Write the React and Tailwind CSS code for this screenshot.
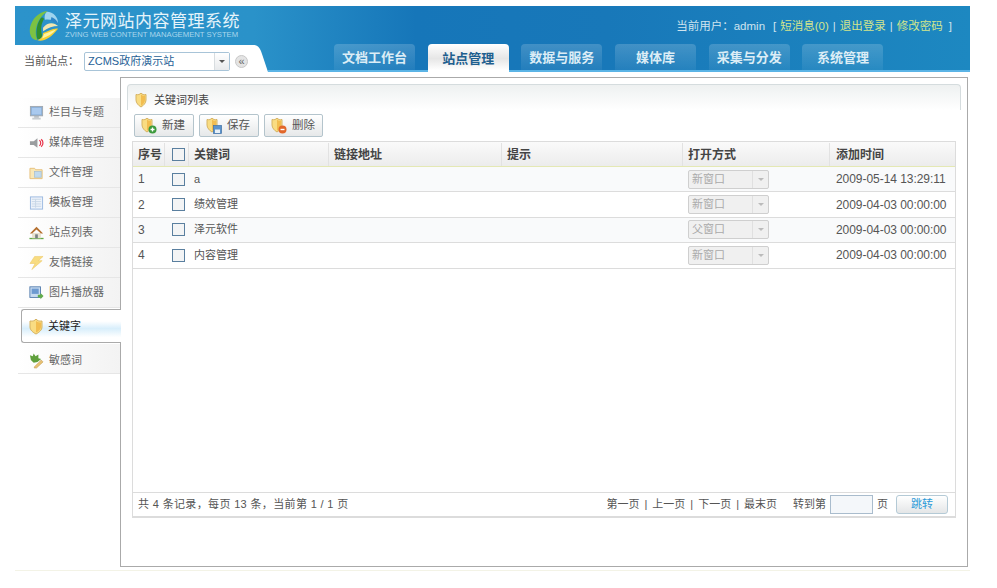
const tabs = ['文档工作台', '站点管理', '数据与服务', '媒体库', '采集与分发', '系统管理'];

const rows = [
  { id: 1, name: 'a', open: '新窗口', time: '2009-05-14 13:29:11' },
  { id: 2, name: '绩效管理', open: '新窗口', time: '2009-04-03 00:00:00' },
  { id: 3, name: '泽元软件', open: '父窗口', time: '2009-04-03 00:00:00' },
  { id: 4, name: '内容管理', open: '新窗口', time: '2009-04-03 00:00:00' },
];

const gridCols = 'grid grid-cols-[32px_24px_140px_173px_181px_147px_1fr]';

function Logo() {
  return (
    <svg width="30" height="32" viewBox="0 0 32 36" preserveAspectRatio="none">
      <path d="M20 1 C10 2 3 10 1 20 C0 28 3 34 9 34 C6 28 7 18 11 11 C13 7 17 3 20 1Z" fill="#7cc243" />
      <path d="M12 10 C8 16 7 26 9 33 C12 33 14 31 14 28 C12 22 13 15 16 10 C15 8 13 8 12 10Z" fill="#2f8f2e" />
      <path d="M19 2 C26 2 31 8 31 15 C27 12 22 10 17 11 C16 7 17 4 19 2Z" fill="#9fd4ee" />
      <path d="M24 8 C28 10 31 13 31 16 C28 14 26 13 23 12Z" fill="#2f86c8" />
      <path d="M15 20 C20 13 27 14 31 18 C26 18 20 20 15 24Z" fill="#f3e7b0" />
      <path d="M9 34 C15 36 23 32 31 21 C26 20 20 24 15 26 C15 30 13 33 9 34Z" fill="#f6d02f" />
      <path d="M16 27 C20 26 25 23 29 22 C25 27 20 30 14 32Z" fill="#fff3a0" />
    </svg>
  );
}

function Shield({ badge }) {
  return (
    <svg width="17" height="17" viewBox="0 0 17 17" className="shrink-0">
      <path d="M2 2.5 C4 3 6 2.5 7 1 C8 2.5 10 3 12 2.5 L12 8 C12 11 9.5 13.5 7 15 C4.500 13.500 2 11 2 8Z" fill="#f9dc82" stroke="#d6b363" strokeWidth="1" />
      <path d="M7 2.500 C8 3.500 9.500 4 11 3.600 L11 8 C11 10 9 12.500 7 13.800Z" fill="#f2bd50" />
      {badge === 'add' && (
        <g>
          <circle cx="12.500" cy="12.500" r="4" fill="#3c9a3c" />
          <path d="M10.500 12.500 H14.500 M12.500 10.500 V14.500" stroke="#fff" strokeWidth="1.300" />
        </g>
      )}
      {badge === 'save' && (
        <g>
          <rect x="8.500" y="8.500" width="8" height="8" fill="#5b93cc" stroke="#3f6fa3" strokeWidth="0.700" />
          <rect x="10" y="12.500" width="5" height="3.500" fill="#e8f0f6" />
        </g>
      )}
      {badge === 'del' && (
        <g>
          <circle cx="12.500" cy="12.500" r="4" fill="#e2672a" />
          <path d="M10.500 12.500 H14.500" stroke="#fff" strokeWidth="1.400" />
        </g>
      )}
    </svg>
  );
}

const icons = {
  monitor: (
    <svg width="16" height="16" viewBox="0 0 16 16">
      <rect x="1.500" y="1" width="13" height="10" fill="#8aaed6" stroke="#a0a8b0" />
      <rect x="3" y="2.500" width="10" height="7" fill="#a9c9ee" />
      <rect x="5.500" y="11.500" width="5" height="1.500" fill="#a8b0b6" />
      <rect x="3.500" y="13" width="9" height="2" fill="#c8cdd1" />
    </svg>
  ),
  speaker: (
    <svg width="16" height="16" viewBox="0 0 16 16">
      <path d="M1 6 H5 L9 3 V13 L5 10 H1Z" fill="#9a9d9f" />
      <path d="M11 5 C13 6 13 10 11 11 M13 4 C15.500 6 15.500 10 13 12" fill="none" stroke="#e8354c" strokeWidth="1.300" />
    </svg>
  ),
  folder: (
    <svg width="16" height="16" viewBox="0 0 16 16">
      <path d="M1 3 H6 L7 4.500 H14 V14 H1Z" fill="#f8e8b8" stroke="#e6c07c" />
      <rect x="6" y="6.500" width="7" height="6" fill="#c0daee" stroke="#9fbad2" strokeWidth="0.700" />
    </svg>
  ),
  template: (
    <svg width="16" height="16" viewBox="0 0 16 16">
      <rect x="1.500" y="1.500" width="13" height="13" fill="#eef3fa" stroke="#9ab8e0" />
      <path d="M3 4 H13 M3 6.500 H13 M3 9 H13 M3 11.500 H13 M7 4 V13" stroke="#c8d6e6" strokeWidth="1" />
    </svg>
  ),
  house: (
    <svg width="17" height="16" viewBox="0 0 17 16">
      <path d="M0.500 15 H16.500 V13.500 H0.500Z" fill="#63a845" />
      <path d="M3.500 8 H13.500 V14 H3.500Z" fill="#e8e2cf" />
      <path d="M1 8.500 L8.500 1 L16 8.500 L13.500 8.500 L8.500 4 L3.500 8.500Z" fill="#b5702f" />
      <rect x="7" y="9.500" width="3" height="4.500" fill="#777f85" />
    </svg>
  ),
  bolt: (
    <svg width="16" height="16" viewBox="0 0 16 16">
      <path d="M6 1 H15 L10 5.500 H14 L3 15 L6.500 8.500 H1Z" fill="#f8dc80" stroke="#ecc765" strokeWidth="0.600" />
    </svg>
  ),
  picture: (
    <svg width="17" height="16" viewBox="0 0 17 16">
      <rect x="1" y="1" width="12" height="12" fill="#c8dbf0" stroke="#4f79ab" />
      <rect x="3" y="3" width="8" height="6" fill="#6d9ad0" />
      <path d="M10 10 H13 V8 L16.500 11.500 L13 15 V13 H10Z" fill="#62ac4a" />
    </svg>
  ),
  shield: (
    <svg width="17" height="17" viewBox="0 0 17 17">
      <path d="M2 3 C5 3.500 7 2.500 8 1 C9 2.500 11 3.500 14 3 L14 9 C14 12 11 14.500 8 16 C5 14.500 2 12 2 9Z" fill="#f9dc82" stroke="#d6b363" />
      <path d="M8 3 C9.500 4 11 4.500 13 4.500 L13 9 C13 11 10.500 13.500 8 14.500Z" fill="#f2bd50" />
    </svg>
  ),
  leaf: (
    <svg width="16" height="17" viewBox="0 0 16 17">
      <path d="M1 3 L4 4 L5 1 L7 4 L10 2 L10 6 L13 7 L9 10 L5 11 L2 8Z" fill="#5fa03c" />
      <path d="M6 15 L13 8 L15 10 L8 16.500 L5.500 16.500Z" fill="#e8c274" stroke="#b88f45" strokeWidth="0.500" />
    </svg>
  ),
};

const navItems = [
  { label: '栏目与专题', icon: 'monitor' },
  { label: '媒体库管理', icon: 'speaker' },
  { label: '文件管理', icon: 'folder' },
  { label: '模板管理', icon: 'template' },
  { label: '站点列表', icon: 'house' },
  { label: '友情链接', icon: 'bolt' },
  { label: '图片播放器', icon: 'picture' },
];

function NavItem({ item, className = '' }) {
  return (
    <div className={`flex h-[30px] items-center gap-[5px] border-b border-[#e6e6e6] bg-gradient-to-r from-white to-[#f3f3f3] pl-[11px] text-[11px] text-[#666] ${className}`}>
      <span className="flex w-[15px] justify-center">{icons[item.icon]}</span>
      <span>{item.label}</span>
    </div>
  );
}

function ToolButton({ badge, label }) {
  return (
    <button className="flex h-[23px] w-full items-center gap-[5px] rounded-[2px] border border-[#b4c4cc] bg-gradient-to-b from-white to-[#e6e8e9] pl-[5px] text-[11.5px] text-[#555]">
      <Shield badge={badge} />
      <span>{label}</span>
    </button>
  );
}

export default function App() {
  return (
    <div className="h-[588px] w-[997px] overflow-hidden bg-white pt-[6px] pl-[15px] font-['Liberation_Sans','Noto_Sans_CJK_SC',sans-serif] text-[12px] leading-none">
      <div className="w-[955px] bg-[linear-gradient(90deg,#2c93cb_0%,#2a92c9_25%,#1676b9_42%,#1878b9_62%,#1d88c1_100%)]">
        <div className="flex h-[39px] items-center justify-between pr-[18px]">
          <div className="flex items-center pl-[14px]">
            <Logo />
            <div className="ml-[6px] mt-[1px]">
              <div className="text-[17px] leading-[20px] tracking-[0.5px] text-[#e6f4fa]">泽元网站内容管理系统</div>
              <div className="-mt-[2px] whitespace-nowrap text-[7.7px] leading-[10px] text-[#a9d6ec]">ZVING WEB CONTENT MANAGEMENT SYSTEM</div>
            </div>
          </div>
          <div className="mt-[3px] flex items-center gap-[4px] whitespace-nowrap text-[11.5px] text-[#cfe4ef]">
            <span>当前用户：admin</span>
            <span className="ml-[4px]">[</span>
            <span className="text-[#d3e58d]">短消息(0)</span>
            <span>|</span>
            <span className="text-[#d3e58d]">退出登录</span>
            <span>|</span>
            <span className="text-[#d3e58d]">修改密码</span>
            <span className="ml-[2px]">]</span>
          </div>
        </div>
        <div className="flex h-[27px]">
          <div className="flex w-[235px] items-center bg-white pl-[9px] pt-[6px] text-[#555]">
            <span className="w-[60px] text-[11px]">当前站点：</span>
            <div className="flex h-[19px] w-[146px] shrink-0 items-center rounded-[2px] border border-[#a8c4d8] bg-white pl-[3px] text-[11px] text-[#1f5f96]">
              <span className="flex-1">ZCMS政府演示站</span>
              <span className="flex h-full w-[15px] items-center justify-center border-l border-[#d8dde0] bg-gradient-to-b from-white to-[#e8eaec]">
                <span className="h-0 w-0 border-x-[3px] border-t-[3px] border-x-transparent border-t-[#555]" />
              </span>
            </div>
            <span className="ml-[5px] flex h-[13px] w-[13px] shrink-0 items-center justify-center rounded-full border border-[#c8c8c8] bg-[#e4e4e4] text-[11px] text-[#666]">«</span>
          </div>
          <svg width="18" height="27" viewBox="0 0 18 27" className="shrink-0">
            <path d="M0 0 H3 C8 0 10 3 12 9 L18 27 H0Z" fill="#fff" />
          </svg>
          <div className="flex flex-1 gap-[12.7px] border-b-2 border-[#5bb4e6] pl-[66px]">
            {tabs.map((tab, i) =>
              i === 1 ? (
                <div key={tab} className="-mt-[1px] -mb-[2px] flex h-[29px] w-[81px] items-center justify-center rounded-t-[4px] bg-[linear-gradient(180deg,#fff_0%,#e6e6e6_50%,#fff_90%)] text-[13px] font-bold text-[#1f5f8f]">
                  {tab}
                </div>
              ) : (
                <div key={tab} className="-mt-[1px] flex h-[26px] w-[81px] items-center justify-center rounded-t-[4px] bg-[linear-gradient(180deg,#ffffff2e_0%,#ffffff0d_100%)] text-[13px] font-bold text-[#dcedf6]">
                  {tab}
                </div>
              ),
            )}
          </div>
        </div>
      </div>

      <div className="mt-[5px] flex w-[953px]">
        <div className="relative z-10 w-[105px] shrink-0 pt-[21px]">
          <div className="ml-[3px]">
            {navItems.map((item) => (
              <NavItem key={item.label} item={item} />
            ))}
          </div>
          <div className="-mr-[1px] ml-[6px] mt-[1px] flex h-[34px] items-center gap-[3px] rounded-l-[3px] border-[1.500px] border-r-0 border-[#aaa] bg-[linear-gradient(180deg,#fff_35%,#d8eefb_58%,#fff_85%)] pl-[6px] pt-[1px] text-[11px] text-[#222]">
            <span className="flex w-[17px] justify-center">{icons.shield}</span>
            <span>关键字</span>
          </div>
          <div className="ml-[3px] mt-[1px]">
            <NavItem item={{ label: '敏感词', icon: 'leaf' }} className="pt-[4px]" />
          </div>
        </div>

        <div className="h-[490px] w-[848px] border border-[#aaa] px-[6px] pt-[6px]">
          <div className="flex h-[26px] items-center gap-[3px] rounded-t-[4px] border border-b-0 border-[#d5dcde] bg-gradient-to-b from-[#eef1f1] to-white pl-[6px] pt-[6px] text-[11px] text-[#444]">
            <Shield />
            <span>关键词列表</span>
          </div>
          <div className="ml-[7px] mt-[4px] flex gap-[5px]">
            <div className="w-[60px]"><ToolButton badge="add" label="新建" /></div>
            <div className="w-[60px]"><ToolButton badge="save" label="保存" /></div>
            <div className="w-[59px]"><ToolButton badge="del" label="删除" /></div>
          </div>

          <div className="ml-[5px] mt-[4px] flex h-[377px] w-[824px] flex-col border border-b-2 border-[#dcdcdc] text-[#555]">
            <div className={`${gridCols} h-[25px] shrink-0 items-center border-b border-[#e4e8b4] bg-gradient-to-b from-[#fafafa] to-[#ececec] pt-[1px] font-bold text-[#444]`}>
              <div className="flex h-full items-center border-r border-[#e2e2e2] pl-[5px]">序号</div>
              <div className="flex h-full items-center border-r border-[#e2e2e2] pl-[7px]">
                <span className="h-[13px] w-[13px] border border-[#5a7f9f] bg-[#f3f4f5]" />
              </div>
              <div className="flex h-full items-center border-r border-[#e2e2e2] pl-[5px]">关键词</div>
              <div className="flex h-full items-center border-r border-[#e2e2e2] pl-[5px]">链接地址</div>
              <div className="flex h-full items-center border-r border-[#e2e2e2] pl-[5px]">提示</div>
              <div className="flex h-full items-center border-r border-[#e2e2e2] pl-[5px]">打开方式</div>
              <div className="pl-[6px]">添加时间</div>
            </div>

            {rows.map((row) => (
              <div key={row.id} className={`${gridCols} h-[25.4px] shrink-0 items-center border-b border-[#dcdcdc] ${row.id % 2 ? 'bg-[#f9fafb]' : 'bg-white'}`}>
                <div className="pl-[5px]">{row.id}</div>
                <div className="flex pl-[7px]">
                  <span className="h-[13px] w-[13px] border border-[#5a7f9f] bg-[#f3f4f5]" />
                </div>
                <div className="pl-[5px] text-[11px]">{row.name}</div>
                <div />
                <div />
                <div className="pl-[5px]">
                  <div className="flex h-[19px] w-[81px] items-center rounded-[2px] border border-[#cfcfcf] bg-[#f0f0f0] pl-[3px] text-[11px] text-[#aaa]">
                    <span className="flex-1">{row.open}</span>
                    <span className="flex h-full w-[16px] items-center justify-center border-l border-[#e0e0e0]">
                      <span className="h-0 w-0 border-x-[3px] border-t-[3px] border-x-transparent border-t-[#bbb]" />
                    </span>
                  </div>
                </div>
                <div className="whitespace-nowrap pl-[6px] tracking-[-0.05px]">{row.time}</div>
              </div>
            ))}

            <div className="flex-1" />

            <div className="flex h-[24px] shrink-0 items-center justify-between border-t border-[#dcdcdc] pl-[5px] pr-[7px] text-[11px]">
              <span className="tracking-[0.35px]">共 4 条记录，每页 13 条，当前第 1 / 1 页</span>
              <div className="flex items-center">
                <div className="flex items-center gap-[5px]">
                  <span>第一页</span>
                  <span>|</span>
                  <span>上一页</span>
                  <span>|</span>
                  <span>下一页</span>
                  <span>|</span>
                  <span>最末页</span>
                </div>
                <span className="ml-[16px]">转到第</span>
                <input className="ml-[4px] h-[19px] w-[43px] border border-[#a9bccd] bg-[#f4f7fa]" readOnly />
                <span className="ml-[4px]">页</span>
                <button className="ml-[8px] h-[19px] w-[52px] rounded-[3px] border border-[#b4cad6] bg-gradient-to-b from-white to-[#e4e6e7] text-[#2a9ad8]">跳转</button>
              </div>
            </div>
          </div>
        </div>
      </div>

      <div className="mt-[3px] h-px w-[955px] bg-[#f3f3e6]" />
    </div>
  );
}
